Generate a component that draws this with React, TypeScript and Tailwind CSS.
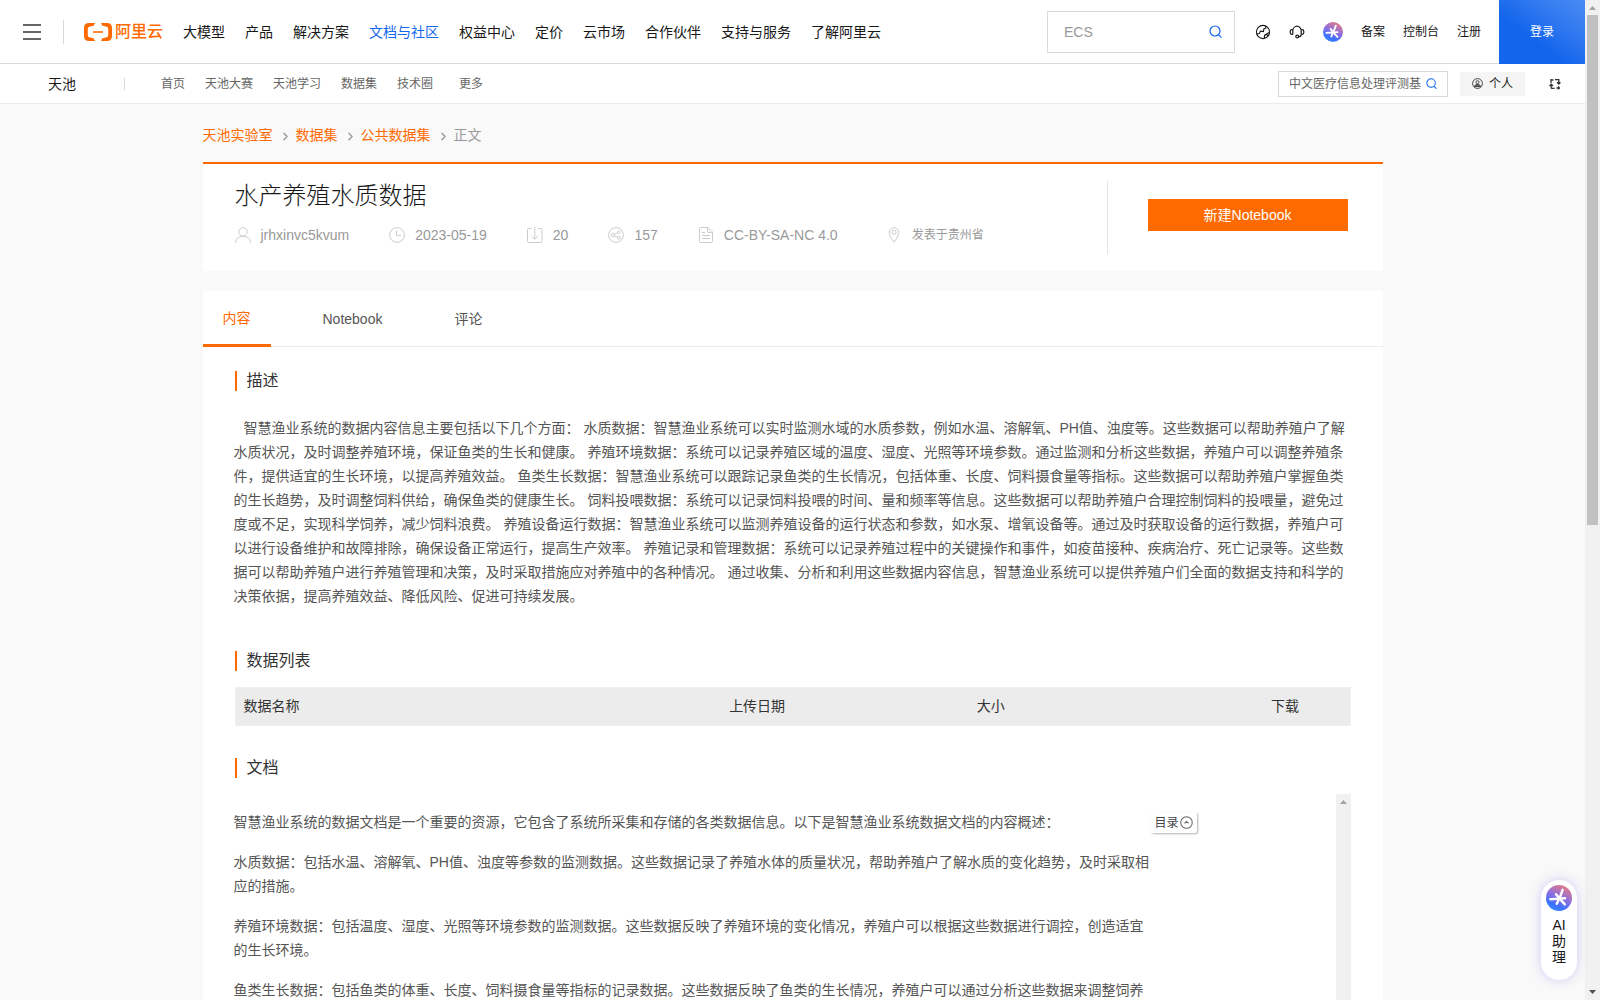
import { ChevronRight } from "lucide-react";

const mainNav = ["大模型", "产品", "解决方案", "文档与社区", "权益中心", "定价", "云市场", "合作伙伴", "支持与服务", "了解阿里云"];
const subNav = ["首页", "天池大赛", "天池学习", "数据集", "技术圈"];
const crumbs = ["天池实验室", "数据集", "公共数据集"];

const description =
  "智慧渔业系统的数据内容信息主要包括以下几个方面： 水质数据：智慧渔业系统可以实时监测水域的水质参数，例如水温、溶解氧、PH值、浊度等。这些数据可以帮助养殖户了解水质状况，及时调整养殖环境，保证鱼类的生长和健康。 养殖环境数据：系统可以记录养殖区域的温度、湿度、光照等环境参数。通过监测和分析这些数据，养殖户可以调整养殖条件，提供适宜的生长环境，以提高养殖效益。 鱼类生长数据：智慧渔业系统可以跟踪记录鱼类的生长情况，包括体重、长度、饲料摄食量等指标。这些数据可以帮助养殖户掌握鱼类的生长趋势，及时调整饲料供给，确保鱼类的健康生长。 饲料投喂数据：系统可以记录饲料投喂的时间、量和频率等信息。这些数据可以帮助养殖户合理控制饲料的投喂量，避免过度或不足，实现科学饲养，减少饲料浪费。 养殖设备运行数据：智慧渔业系统可以监测养殖设备的运行状态和参数，如水泵、增氧设备等。通过及时获取设备的运行数据，养殖户可以进行设备维护和故障排除，确保设备正常运行，提高生产效率。 养殖记录和管理数据：系统可以记录养殖过程中的关键操作和事件，如疫苗接种、疾病治疗、死亡记录等。这些数据可以帮助养殖户进行养殖管理和决策，及时采取措施应对养殖中的各种情况。 通过收集、分析和利用这些数据内容信息，智慧渔业系统可以提供养殖户们全面的数据支持和科学的决策依据，提高养殖效益、降低风险、促进可持续发展。";

const docs = [
  "智慧渔业系统的数据文档是一个重要的资源，它包含了系统所采集和存储的各类数据信息。以下是智慧渔业系统数据文档的内容概述：",
  "水质数据：包括水温、溶解氧、PH值、浊度等参数的监测数据。这些数据记录了养殖水体的质量状况，帮助养殖户了解水质的变化趋势，及时采取相应的措施。",
  "养殖环境数据：包括温度、湿度、光照等环境参数的监测数据。这些数据反映了养殖环境的变化情况，养殖户可以根据这些数据进行调控，创造适宜的生长环境。",
  "鱼类生长数据：包括鱼类的体重、长度、饲料摄食量等指标的记录数据。这些数据反映了鱼类的生长情况，养殖户可以通过分析这些数据来调整饲养策略。",
];

function Logo() {
  return (
    <a href="#" className="ml-5 flex items-center gap-[3px] text-[#ff6a00]">
      <svg width="28" height="18" viewBox="0 0 28 18" fill="none" stroke="currentColor">
        <path d="M11 0H5Q0 0 0 5V13Q0 18 5 18H11L9.6 15.2L5.2 14.2Q3.8 13.8 3.8 12.4V5.6Q3.8 4.2 5.2 3.8L9.6 2.8Z" fill="currentColor" stroke="none" />
        <path d="M17 0H23Q28 0 28 5V13Q28 18 23 18H17L18.4 15.2L22.8 14.2Q24.2 13.8 24.2 12.4V5.6Q24.2 4.2 22.8 3.8L18.4 2.8Z" fill="currentColor" stroke="none" />
        <path d="M9 9H19" strokeWidth="1.6" />
      </svg>
      <span className="text-base leading-5 font-medium">阿里云</span>
    </a>
  );
}

function SearchIcon({ size }: { size: number }) {
  return (
    <svg width={size} height={size} viewBox="0 0 13 13" fill="none" stroke="#1366ec" strokeWidth="1.2">
      <circle cx="6" cy="6" r="5" />
      <path d="M9.6 9.8L12.4 12.6" />
    </svg>
  );
}

function AiIcon({ size, id }: { size: number; id: string }) {
  return (
    <svg width={size} height={size} viewBox="0 0 26 26">
      <defs>
        <linearGradient id={id} x1="0.75" y1="0.05" x2="0.3" y2="1">
          <stop offset="0" stopColor="#e07a86" />
          <stop offset="0.45" stopColor="#8f6fe0" />
          <stop offset="0.8" stopColor="#3a72ff" />
          <stop offset="1" stopColor="#3a8cff" />
        </linearGradient>
      </defs>
      <circle cx="13" cy="13" r="13" fill={`url(#${id})`} />
      <g stroke="#fff" strokeWidth="2.4" strokeLinecap="round">
        <path d="M13.6 13.4L16.6 4.8" />
        <path d="M13.6 13.6L4.4 14.2" />
        <path d="M13.2 13.2L10 9.2" />
        <path d="M13.6 13.4L19 13.2" />
        <path d="M13.4 13.4L18.8 19.4" />
        <path d="M13.2 13.6L10.8 18.8" />
      </g>
    </svg>
  );
}

function GlobeIcon() {
  return (
    <svg width="16" height="16" viewBox="0 0 16 16" fill="none" stroke="#181818" strokeWidth="1.1">
      <circle cx="8" cy="8" r="6.6" />
      <path d="M1.8 10L4.4 9.6L5.4 7.2L8.4 7.6L8.8 5L10.8 4.2L10.6 2.2" />
      <path d="M9.6 14.2Q8.8 11 11 10.4Q12.6 10.2 12.4 12.6M11.4 10.2L14.2 8.6" />
    </svg>
  );
}

function HeadsetIcon() {
  return (
    <svg width="16" height="16" viewBox="0 0 16 16" fill="none" stroke="#181818" strokeWidth="1.2">
      <path d="M3.8 10.4V6.8A4.2 4.6 0 0 1 12.2 6.8V10.4" />
      <path d="M3.8 5.6H3Q1.2 5.6 1.2 7.4V8.6Q1.2 10.4 3 10.4H3.8" />
      <path d="M12.2 5.6H13Q14.8 5.6 14.8 7.4V8.6Q14.8 10.4 13 10.4H12.2" />
      <path d="M12.2 10.4Q12.2 12.8 9.6 12.8" />
      <circle cx="8.2" cy="12.6" r="1.4" />
    </svg>
  );
}

const metaIcons = {
  user: (
    <>
      <circle cx="8" cy="4.8" r="4.2" />
      <path d="M0.6 16V15Q1.2 9.4 8 9.2Q14.8 9.4 15.4 15V16" />
    </>
  ),
  clock: (
    <>
      <circle cx="8" cy="8" r="7.4" />
      <path d="M7.6 3.4V8.6H12" />
    </>
  ),
  download: (
    <>
      <path d="M4.6 1.5H1.5Q0.5 1.5 0.5 2.5V14.5Q0.5 15.5 1.5 15.5H14Q15 15.5 15 14.5V2.5Q15 1.5 14 1.5H11" />
      <path d="M7.8 0V12M4.4 8.8L7.8 12.2L11.2 8.8" />
    </>
  ),
  share: (
    <>
      <circle cx="8" cy="8" r="7.4" />
      <circle cx="4.9" cy="8.2" r="1.6" />
      <circle cx="10.8" cy="5.2" r="1.2" />
      <circle cx="10.8" cy="10.8" r="1.4" />
      <path d="M6.4 7.4L9.7 5.8M6.4 8.9L9.5 10.3" />
    </>
  ),
  file: (
    <>
      <path d="M10 0.5H2.5Q1.5 0.5 1.5 1.5V14.5Q1.5 15.5 2.5 15.5H13.5Q14.5 15.5 14.5 14.5V5Z" />
      <path d="M9.6 0.8V5.4H14.4M4 5.5H7M4 8.5H12M4 11.5H12" />
    </>
  ),
  pin: (
    <>
      <path d="M8 15.2Q3.2 9 3.2 5.4A4.8 4.8 0 0 1 12.8 5.4Q12.8 9 8 15.2Z" />
      <circle cx="8" cy="5.2" r="2.2" />
    </>
  ),
};

function MetaItem({ icon, text, className = "text-sm" }: { icon: keyof typeof metaIcons; text: string; className?: string }) {
  return (
    <li className={`flex items-center gap-[10px] ${className}`}>
      <svg width="16" height="16" viewBox="0 0 16 16" fill="none" stroke="#ccc" strokeWidth="1">
        {metaIcons[icon]}
      </svg>
      <span className="leading-5">{text}</span>
    </li>
  );
}

function SectionTitle({ children }: { children: string }) {
  return (
    <h2 className="flex h-5 items-center border-l-2 border-[#ff6a00] pl-[10px] text-base leading-5 text-[#333]">{children}</h2>
  );
}

export default function App() {
  return (
    <div className="flex h-screen overflow-hidden bg-[#f9f9f9] font-['Liberation_Sans','Noto_Sans_CJK_SC',sans-serif] text-sm text-[#181818]" lang="zh-CN">
      <div className="relative min-w-0 flex-1">
        <header className="bg-white">
          <div className="flex h-16 items-center border-b border-[#d9d9d9]">
            <button aria-label="菜单" className="ml-[23px] flex w-[18px] flex-col gap-[5px]">
              <span className="h-[2px] w-full bg-[#666]" />
              <span className="h-[2px] w-full bg-[#666]" />
              <span className="h-[2px] w-full bg-[#666]" />
            </button>
            <span className="ml-[22px] h-6 w-px bg-[#d9d9d9]" />
            <Logo />
            <nav className="ml-5 flex gap-5 leading-5 whitespace-nowrap">
              {mainNav.map((item) => (
                <a key={item} href="#" className={item === "文档与社区" ? "text-[#1366ec]" : ""}>
                  {item}
                </a>
              ))}
            </nav>
            <div className="ml-auto flex items-center self-stretch text-xs whitespace-nowrap">
              <label className="flex h-[42px] w-[188px] items-center border border-[#d9d9d9] pr-3 pl-4">
                <input aria-label="搜索" placeholder="ECS" className="min-w-0 flex-1 text-sm outline-none placeholder:text-[#999]" />
                <SearchIcon size={13} />
              </label>
              <a href="#" aria-label="语言" className="ml-5"><GlobeIcon /></a>
              <a href="#" aria-label="支持" className="ml-[18px]"><HeadsetIcon /></a>
              <a href="#" aria-label="AI 助理" className="ml-[18px]"><AiIcon size={20} id="ai-top" /></a>
              <a href="#" className="ml-[18px]">备案</a>
              <a href="#" className="ml-[18px]">控制台</a>
              <a href="#" className="ml-[18px]">注册</a>
              <a href="#" className="-mb-px ml-[18px] flex w-[86px] items-center justify-center self-stretch bg-linear-to-tr from-[#1366ec] from-40% to-[#4a8cf3] text-white">
                登录
              </a>
            </div>
          </div>
          <div className="flex h-10 items-center border-b border-[#ebebeb] text-xs whitespace-nowrap text-[#666]">
            <a href="#" className="ml-12 text-sm leading-5 text-[#181818]">天池</a>
            <span className="ml-12 h-3 w-px bg-[#d9d9d9]" />
            <nav className="ml-9 flex gap-5">
              {subNav.map((item) => (
                <a key={item} href="#">{item}</a>
              ))}
              <a href="#" className="ml-[6px]">更多</a>
            </nav>
            <label className="ml-auto flex h-[26px] w-[170px] items-center gap-1 border border-[#d9d9d9] px-[10px]">
              <input aria-label="搜索天池" placeholder="中文医疗信息处理评测基" className="min-w-0 flex-1 outline-none placeholder:text-[#666]" />
              <SearchIcon size={11} />
            </label>
            <button className="ml-3 flex h-6 items-center gap-[6px] bg-[#f5f5f5] px-3 text-[#181818]">
              <svg width="11" height="11" viewBox="0 0 11 11" fill="none" stroke="#444" strokeWidth="1">
                <circle cx="5.5" cy="5.5" r="4.9" />
                <circle cx="5.5" cy="4.2" r="1.5" />
                <path d="M2.4 8.4Q3 6.4 5.5 6.4Q8 6.4 8.6 8.4Z" fill="#666" />
              </svg>
              个人
            </button>
            <button aria-label="切换" className="mr-6 ml-6">
              <svg width="12" height="12" viewBox="0 0 12 12" fill="none" stroke="#333" strokeWidth="1.3">
                <path d="M1.5 2H4.5M2 1V5M6 1.6H9.8V5M8 4.2L9.8 6L11.4 4.2" />
                <path d="M2.2 10.4V7M0.6 8L2.2 6.2L4 8M2.2 10.4H5.6M7.4 10H11M9.6 8.2V11.4" />
              </svg>
            </button>
          </div>
        </header>

        <main className="mx-auto max-w-[1180px]">
          <nav className="flex h-[58px] items-center pt-1 leading-5">
            {crumbs.map((item) => (
              <span key={item} className="flex items-center">
                <a href="#" className="text-[#ff6a00]">{item}</a>
                <ChevronRight className="mt-[2px] mr-1 ml-[6px] h-[13px] w-[13px] text-[#999]" strokeWidth={2.5} />
              </span>
            ))}
            <span className="text-[#999]">正文</span>
          </nav>

          <section className="flex h-[109px] items-start border-t-2 border-[#ff6a00] bg-white pl-8">
            <div className="flex-1">
              <h1 className="mt-4 text-2xl leading-8 font-light">水产养殖水质数据</h1>
              <ul className="mt-[13px] flex gap-10 text-[#999]">
                <MetaItem icon="user" text="jrhxinvc5kvum" />
                <MetaItem icon="clock" text="2023-05-19" />
                <MetaItem icon="download" text="20" />
                <MetaItem icon="share" text="157" />
                <MetaItem icon="file" text="CC-BY-SA-NC 4.0" />
                <MetaItem icon="pin" text="发表于贵州省" className="ml-2 text-xs" />
              </ul>
            </div>
            <div className="mt-[17px] flex h-[73px] w-[276px] border-l border-[#e5e5e5] pl-10">
              <button className="mt-[18px] h-8 w-[200px] bg-[#ff6a00] leading-5 text-white">新建Notebook</button>
            </div>
          </section>

          <section className="mt-5 bg-white">
            <div className="flex h-14 gap-8 border-b border-[#ebebeb] leading-5 text-[#555]">
              <button className="-mb-px border-b-3 border-[#ff6a00] px-5 text-[#ff6a00]">内容</button>
              <button className="px-5">Notebook</button>
              <button className="px-5">评论</button>
            </div>

            <div className="px-8 pt-6">
              <SectionTitle>描述</SectionTitle>
              <p className="mt-[25px] -ml-px pr-1 indent-[10px] leading-6 text-[#555]">{description}</p>

              <div className="mt-[43px]">
                <SectionTitle>数据列表</SectionTitle>
              </div>
              <table className="mt-4 w-full table-fixed border border-[#efefef] bg-[#ececec] text-left leading-5 text-[#333]">
                <thead>
                  <tr>
                    <th className="w-[43.6%] px-2 pt-2 pb-[9px] font-normal">数据名称</th>
                    <th className="w-[22.2%] px-2 pt-2 pb-[9px] font-normal">上传日期</th>
                    <th className="w-[26.4%] px-2 pt-2 pb-[9px] font-normal">大小</th>
                    <th className="px-2 pt-2 pb-[9px] font-normal">下载</th>
                  </tr>
                </thead>
              </table>

              <div className="mt-8">
                <SectionTitle>文档</SectionTitle>
              </div>
              <div className="mt-4 -ml-px flex h-[400px] overflow-hidden">
                <article className="w-[920px] pt-4 leading-6 text-[#555]">
                  {docs.map((text) => (
                    <p key={text} className="mb-4">{text}</p>
                  ))}
                </article>
                <button className="mt-[18px] -ml-[3px] flex h-[21px] items-center gap-px rounded-xs bg-white px-1 text-xs text-[#444] shadow-[1px_1px_2px_rgba(0,0,0,0.3)]">
                  目录
                  <svg width="13" height="13" viewBox="0 0 14 14" fill="none" stroke="#666" strokeWidth="1.1">
                    <circle cx="7" cy="7" r="6.2" />
                    <path d="M4.8 8L7 5.8L9.2 8" />
                  </svg>
                </button>
                <div className="ml-auto w-[15px] bg-[#f1f1f1]">
                  <svg width="15" height="15" viewBox="0 0 15 15"><path d="M4 10L7.5 6L11 10Z" fill="#a3a3a3" /></svg>
                </div>
              </div>
            </div>
          </section>
        </main>

        <button className="absolute right-2 bottom-5 flex h-[100px] w-9 flex-col items-center rounded-full bg-white pt-[5px] text-sm leading-4 shadow-[0_0_12px_rgba(90,90,230,0.28)]">
          <AiIcon size={26} id="ai-float" />
          <span className="mt-[6px]">AI</span>
          <span>助</span>
          <span>理</span>
        </button>
      </div>

      <div className="flex w-[15px] flex-col bg-[#f1f1f1]">
        <svg width="15" height="15" viewBox="0 0 15 15"><path d="M4 10L7.5 6L11 10Z" fill="#a3a3a3" /></svg>
        <div className="mx-[2px] h-[51%] bg-[#c1c1c1]" />
        <svg className="mt-auto" width="15" height="15" viewBox="0 0 15 15"><path d="M4 5L7.5 9L11 5Z" fill="#505050" /></svg>
      </div>
    </div>
  );
}
